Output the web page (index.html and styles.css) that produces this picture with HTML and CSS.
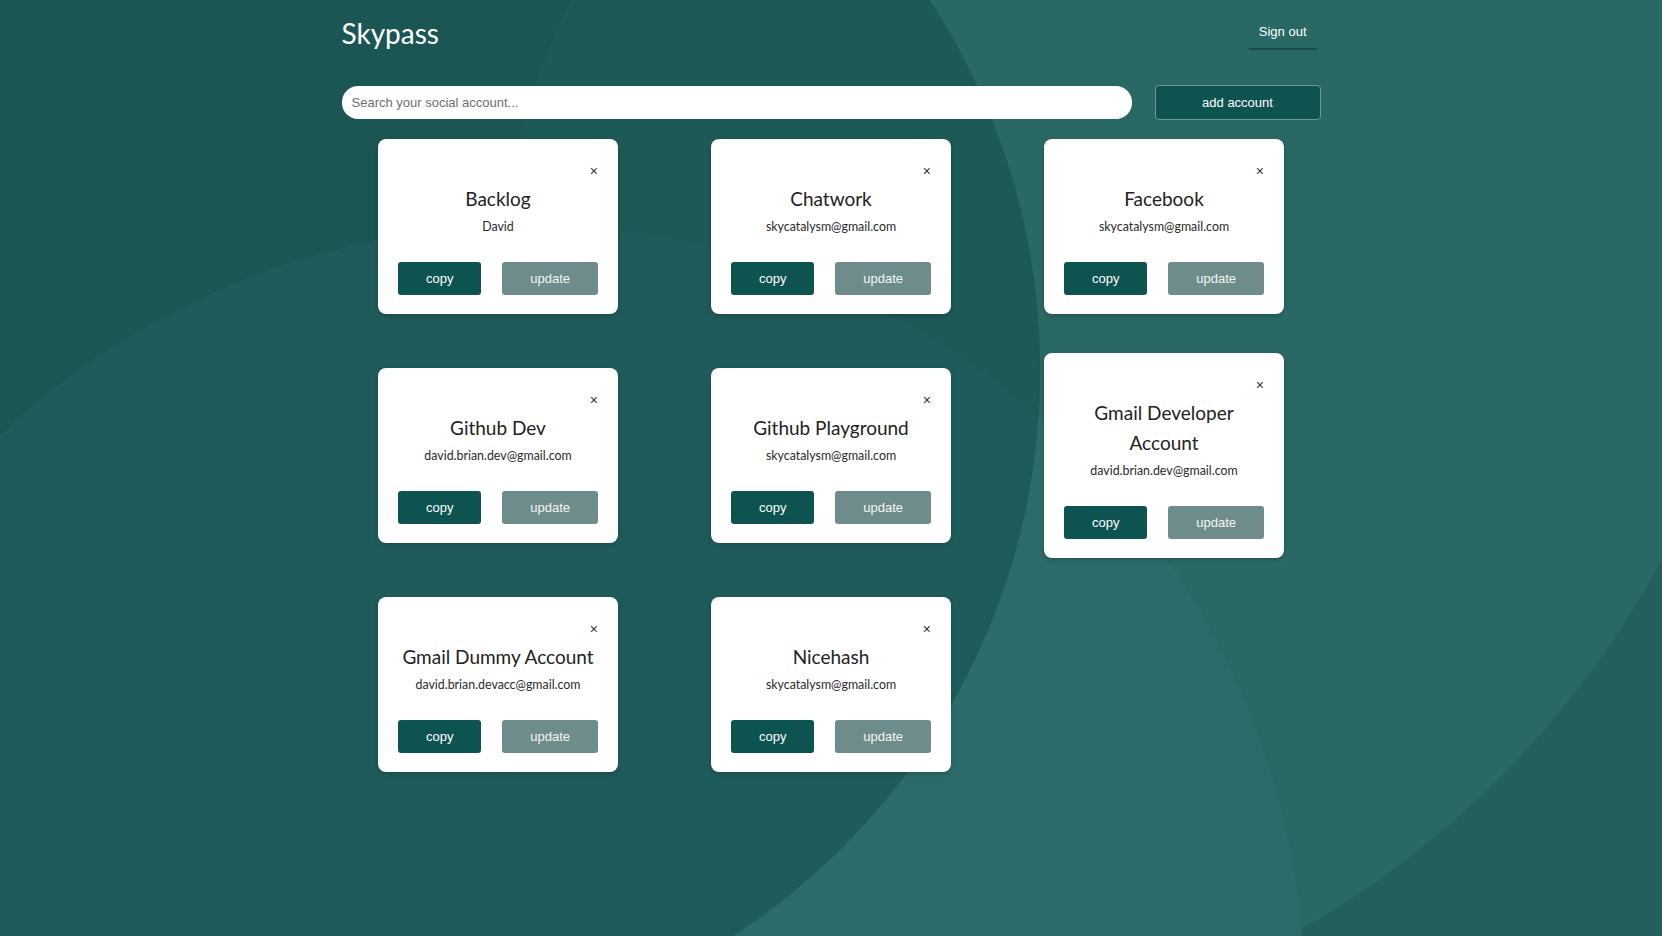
FILE: index.html
```html
<!DOCTYPE html>
<html lang="en">
<head>
<meta charset="utf-8">
<title>Skypass</title>
<link rel="stylesheet" href="styles.css">
</head>
<body>
  <div class="container">
    <header class="topbar">
      <h1 class="brand">Skypass</h1>
      <a class="signout" href="#">Sign out</a>
    </header>
    <div class="searchrow">
      <input class="search" type="text" placeholder="Search your social account...">
      <button class="add-btn" type="button">add account</button>
    </div>
  </div>

  <main class="grid">
    <div class="card">
      <div class="close">×</div>
      <h2 class="title">Backlog</h2>
      <p class="user">David</p>
      <div class="actions"><button class="btn copy">copy</button><button class="btn update">update</button></div>
    </div>
    <div class="card">
      <div class="close">×</div>
      <h2 class="title">Chatwork</h2>
      <p class="user">skycatalysm@gmail.com</p>
      <div class="actions"><button class="btn copy">copy</button><button class="btn update">update</button></div>
    </div>
    <div class="card">
      <div class="close">×</div>
      <h2 class="title">Facebook</h2>
      <p class="user">skycatalysm@gmail.com</p>
      <div class="actions"><button class="btn copy">copy</button><button class="btn update">update</button></div>
    </div>
    <div class="card">
      <div class="close">×</div>
      <h2 class="title">Github Dev</h2>
      <p class="user">david.brian.dev@gmail.com</p>
      <div class="actions"><button class="btn copy">copy</button><button class="btn update">update</button></div>
    </div>
    <div class="card">
      <div class="close">×</div>
      <h2 class="title">Github Playground</h2>
      <p class="user">skycatalysm@gmail.com</p>
      <div class="actions"><button class="btn copy">copy</button><button class="btn update">update</button></div>
    </div>
    <div class="card">
      <div class="close">×</div>
      <h2 class="title">Gmail Developer Account</h2>
      <p class="user">david.brian.dev@gmail.com</p>
      <div class="actions"><button class="btn copy">copy</button><button class="btn update">update</button></div>
    </div>
    <div class="card">
      <div class="close">×</div>
      <h2 class="title">Gmail Dummy Account</h2>
      <p class="user">david.brian.devacc@gmail.com</p>
      <div class="actions"><button class="btn copy">copy</button><button class="btn update">update</button></div>
    </div>
    <div class="card">
      <div class="close">×</div>
      <h2 class="title">Nicehash</h2>
      <p class="user">skycatalysm@gmail.com</p>
      <div class="actions"><button class="btn copy">copy</button><button class="btn update">update</button></div>
    </div>
  </main>
</body>
</html>
```

FILE: styles.css
```css
* { box-sizing: border-box; }

html, body {
  margin: 0;
  padding: 0;
}

body {
  min-height: 936px;
  font-family: "Lato", "Liberation Sans", Arial, sans-serif;
  background-color: #1d5a58;
  background-image: url("data:image/svg+xml,%3Csvg xmlns='http://www.w3.org/2000/svg' width='1662' height='936'%3E%3Cdefs%3E%3CclipPath id='d'%3E%3Ccircle cx='365' cy='370' r='675'/%3E%3C/clipPath%3E%3C/defs%3E%3Crect width='1662' height='936' fill='%23245f5e'/%3E%3Ccircle cx='836' cy='115' r='938' fill='%232a6866'/%3E%3Ccircle cx='530' cy='1000' r='775' fill='%232c6b69'/%3E%3Ccircle cx='365' cy='370' r='675' fill='%231b5655'/%3E%3Cg clip-path='url(%23d)'%3E%3Ccircle cx='1103' cy='278' r='600' fill='%231d5957'/%3E%3Ccircle cx='530' cy='1000' r='775' fill='%231f5b5a'/%3E%3C/g%3E%3C/svg%3E");
  background-repeat: no-repeat;
  background-position: top left;
}

.container {
  width: 979px;
  margin: 0 auto;
}

.topbar {
  display: flex;
  justify-content: space-between;
  align-items: flex-start;
  padding-top: 16px;
}

.brand {
  margin: 0;
  font-family: "Lato", sans-serif;
  font-weight: 400;
  font-size: 28px;
  line-height: 35px;
  color: #ffffff;
}

.signout {
  display: block;
  margin-top: 8px;
  margin-right: 4px;
  padding: 0 10px 9px;
  font-family: "Liberation Sans", Arial, sans-serif;
  font-size: 13px;
  line-height: 15px;
  color: #ffffff;
  text-decoration: none;
  border-bottom: 2px solid #1e4c4a;
}

.searchrow {
  display: flex;
  align-items: center;
  gap: 23px;
  margin-top: 34px;
}

.search {
  flex: 1;
  height: 33px;
  border: none;
  border-radius: 16px;
  background: #ffffff;
  padding: 0 10px;
  font-family: "Liberation Sans", Arial, sans-serif;
  font-size: 13px;
  color: #333;
  outline: none;
}

.search::placeholder {
  color: #6f6f6f;
}

.add-btn {
  width: 166px;
  height: 35px;
  border: 1px solid #6f9896;
  border-radius: 4px;
  background: #0f5350;
  color: #ffffff;
  font-family: "Liberation Sans", Arial, sans-serif;
  font-size: 13px;
  padding: 0;
}

.grid {
  width: 999px;
  margin: 4px auto 0;
  display: grid;
  grid-template-columns: repeat(3, 333px);
  grid-auto-rows: 205px;
  row-gap: 24px;
  justify-items: center;
  align-items: center;
}

.card {
  width: 240px;
  background: #ffffff;
  border-radius: 8px;
  box-shadow: 0 2px 5px rgba(0, 0, 0, 0.18);
  padding: 24px 20px 19px;
  text-align: center;
}

.close {
  text-align: right;
  font-family: "Liberation Sans", Arial, sans-serif;
  font-size: 14px;
  line-height: 16px;
  height: 16px;
  color: #333;
}

.title {
  margin: 5px 0 0;
  font-family: "Lato", sans-serif;
  font-weight: 400;
  font-size: 19px;
  line-height: 30px;
  color: #222222;
}

.user {
  margin: 2px 0 0;
  font-family: "Lato", sans-serif;
  font-size: 12.4px;
  line-height: 22px;
  color: #2a2a2a;
}

.actions {
  display: flex;
  justify-content: space-between;
  margin-top: 24px;
}

.btn {
  height: 33px;
  padding: 0 28px;
  border: none;
  border-radius: 3px;
  font-family: "Liberation Sans", Arial, sans-serif;
  font-size: 13px;
  color: #ffffff;
}

.btn.copy {
  background: #0d5450;
}

.btn.update {
  background: #6f8c8c;
  color: #f2f5f5;
}
```
